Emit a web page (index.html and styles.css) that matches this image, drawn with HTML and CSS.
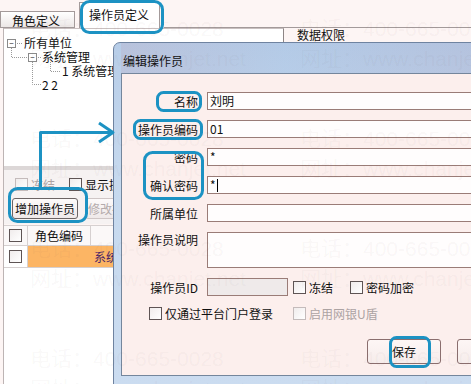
FILE: index.html
```html
<!DOCTYPE html>
<html lang="zh-CN">
<head>
    <meta charset="UTF-8">
    <title>操作员定义</title>
    <link rel="stylesheet" href="styles.css">
</head>
<body>
<div class="screen">
    <div class="tabs">
        <div class="tab">角色定义</div>
        <div class="tab active">操作员定义</div>
        <div class="tab-rest"></div>
    </div>

    <div class="page">
        <div class="left">
            <div class="tree">
                <svg class="tree-lines" width="120" height="100">
                    <path d="M11.5 19 V28.5 H28 M15 14.5 H22 M36 28.5 H41 M32.5 33 V55.5 H41 M50.5 33 V42.5 H60" fill="none" stroke="#9a9a9a" stroke-dasharray="1 1"/>
                </svg>
                <div class="node lvl1"><span class="box">−</span><span class="label">所有单位</span></div>
                <div class="node lvl2"><span class="box">−</span><span class="label">系统管理</span></div>
                <div class="node lvl3"><span class="label">1 系统管理</span></div>
                <div class="node lvl4"><span class="label">2 2</span></div>
            </div>

            <div class="toolbar">
                <div class="checks">
                    <label class="chk off"><span class="cb"></span>冻结</label>
                    <label class="chk"><span class="cb"></span>显示操作员</label>
                </div>
                <div class="btns">
                    <button class="btn">增加操作员</button>
                    <button class="btn off">修改操作员</button>
                </div>
            </div>

            <div class="grid">
                <div class="grid-row head">
                    <div class="cell c-check"><span class="cb"></span></div>
                    <div class="cell c-code">角色编码</div>
                    <div class="cell c-name"></div>
                </div>
                <div class="grid-row">
                    <div class="cell c-check"><span class="cb"></span></div>
                    <div class="cell c-code sel"></div>
                    <div class="cell c-name sel">系统管理</div>
                </div>
            </div>
        </div>

        <div class="group">
            <span class="group-title">数据权限</span>
        </div>
    </div>

    <!-- dialog window -->
    <div class="dialog">
        <div class="titlebar">编辑操作员</div>
        <div class="client">
            <div class="form">
                <span class="lbl">名称</span>
                <div class="field">刘明</div>

                <span class="lbl">操作员编码</span>
                <div class="field">01</div>

                <span class="lbl">密码</span>
                <div class="field">*</div>

                <span class="lbl">确认密码</span>
                <div class="field">*<span class="caret"></span></div>

                <span class="lbl">所属单位</span>
                <div class="field"></div>

                <span class="lbl top">操作员说明</span>
                <div class="field memo"></div>

                <span class="lbl">操作员ID</span>
                <div class="id-row">
                    <div class="field short"></div>
                    <label class="chk"><span class="cb"></span>冻结</label>
                    <label class="chk"><span class="cb"></span>密码加密</label>
                </div>
            </div>

            <div class="opt-row">
                <label class="chk"><span class="cb"></span>仅通过平台门户登录</label>
                <label class="chk off"><span class="cb"></span>启用网银U盾</label>
            </div>

            <div class="actions">
                <button class="btn wide">保存</button>
                <button class="btn wide">取消</button>
            </div>
        </div>
    </div>

    <!-- watermark -->
    <div class="watermark">
        <div class="wm-block"><span>电话：400-665-0028</span><span>电话：400-665-0028</span><span>网址：www.chanjet.net</span><span>网址：www.chanjet.net</span></div>
        <div class="wm-block"><span>电话：400-665-0028</span><span>电话：400-665-0028</span><span>网址：www.chanjet.net</span><span>网址：www.chanjet.net</span></div>
        <div class="wm-block"><span>电话：400-665-0028</span><span>电话：400-665-0028</span><span>网址：www.chanjet.net</span><span>网址：www.chanjet.net</span></div>
        <div class="wm-block"><span>电话：400-665-0028</span><span>电话：400-665-0028</span><span>网址：www.chanjet.net</span><span>网址：www.chanjet.net</span></div>
    </div>

    <!-- tutorial marks -->
    <svg class="marks" width="471" height="384">
        <g fill="none" stroke="#1c92c3" stroke-width="3" stroke-linejoin="round">
            <rect x="81.5" y="1.5" width="81" height="31" rx="8"/>
            <rect x="157.5" y="92.5" width="43" height="18" rx="6"/>
            <rect x="134.5" y="120.5" width="67" height="18" rx="6"/>
            <rect x="144.5" y="152.5" width="58" height="46" rx="8"/>
            <rect x="9.5" y="188.5" width="77" height="33" rx="8"/>
            <rect x="390.5" y="337.5" width="39" height="29" rx="6"/>
            <path d="M40.5 188 V132.5 H112"/>
            <path d="M99 123 L113 132.5 L99 142"/>
        </g>
    </svg>
</div>
</body>
</html>
```

FILE: styles.css
```css
html, body {
    margin: 0;
    padding: 0;
}

body {
    font-family: "Noto Sans CJK SC", "DejaVu Sans", sans-serif;
    font-size: 12px;
    color: #111;
    background: #fdf5f4;
}

.screen {
    position: relative;
    width: 471px;
    height: 384px;
    overflow: hidden;
}

/* tab strip */
.tabs {
    display: flex;
    align-items: flex-end;
    height: 28px;
}

.tab {
    height: 15px;
    line-height: 17px;
    padding: 0 14px 0 11px;
    margin-right: 4px;
    border: 1px solid #a39a9a;
    background: linear-gradient(#ffffff, #ece7e6);
}

.tab.active {
    height: 25px;
    line-height: 24px;
    padding: 0 10px 0 9px;
    border-bottom: none;
    background: #fff;
}

.tab-rest {
    flex: 1;
    border-bottom: 1px solid #a39a9a;
}

/* page under the dialog */
.page {
    display: flex;
    height: 356px;
}

.left {
    width: 280px;
    margin-left: 3px;
    border-left: 1px solid #bdb4b4;
    display: flex;
    flex-direction: column;
}

.tree {
    position: relative;
    height: 130px;
    padding-top: 7px;
    background: #fff;
    border-top: 1px solid #c9c0c0;
    border-right: 1px solid #8d8585;
}

.tree-lines {
    position: absolute;
    top: 0;
    left: -4px;
}

.node {
    display: flex;
    align-items: center;
    height: 14px;
    white-space: nowrap;
}

.node .label {
    line-height: 14px;
}

.lvl1 { padding-left: 3px; }
.lvl2 { padding-left: 24px; }
.lvl3 { padding-left: 58px; }
.lvl4 { padding-left: 38px; }

.box {
    width: 7px;
    height: 7px;
    border: 1px solid #8a8a8a;
    background: #fff;
    font-size: 8px;
    line-height: 6px;
    text-align: center;
    margin-right: 8px;
    color: #222;
}

.lvl2 .box { margin-right: 5px; }

.toolbar {
    border-top: 4px solid #dcd7d7;
    background: #f6f2f2;
    padding: 6px 0 0 0;
    height: 48px;
}

.checks {
    display: flex;
    gap: 14px;
    padding-left: 11px;
    height: 16px;
    align-items: center;
}

.chk {
    display: flex;
    align-items: center;
    gap: 3px;
    white-space: nowrap;
}

.chk.off {
    color: #aca3a3;
}

.cb {
    display: inline-block;
    width: 11px;
    height: 11px;
    border: 1px solid #5e5454;
    background: linear-gradient(135deg, #f0ecec, #ffffff);
}

.chk.off .cb {
    border-color: #c4bbbb;
}

.btns {
    display: flex;
    gap: 7px;
    padding-left: 8px;
    margin-top: 6px;
}

.btn {
    font-family: inherit;
    font-size: 12px;
    height: 21px;
    padding: 0 2px;
    border: 1px solid #6c6464;
    border-radius: 3px;
    background: linear-gradient(#fdfafa, #efe9e9);
    color: #111;
    white-space: nowrap;
}

.btn.off {
    color: #b4abab;
    border-color: #cfc6c6;
}

.grid {
    flex: 1;
    background: #fff;
    margin-top: 1px;
}

.grid-row {
    display: flex;
    height: 21px;
    border-bottom: 1px solid #d6d0d0;
}

.grid-row.head {
    height: 19px;
    background: #fbf8f8;
    border-top: 1px solid #d6d0d0;
}

.cell {
    display: flex;
    align-items: center;
    border-right: 1px solid #d6d0d0;
    white-space: nowrap;
}

.c-check { width: 23px; justify-content: center; }
.c-code { width: 62px; justify-content: center; }
.c-name { flex: 1; padding-left: 4px; color: #4a2468; }

.sel {
    background: #fcb564;
}

.grid-row:not(.head) .c-code { border-right: none; }

.group {
    flex: 1;
    padding: 0 0 0 9px;
    margin-top: -2px;
}

.group-title {
    padding-left: 4px;
    line-height: 16px;
}

/* dialog */
.dialog {
    position: absolute;
    left: 113px;
    top: 42px;
    width: 410px;
    height: 340px;
    border: 1px solid #6f83a0;
    border-radius: 7px 7px 0 0;
    padding: 0 7px 7px 7px;
    background: linear-gradient(#b7cde8, #c6d9ee 40%, #cbdcf0);
    box-sizing: content-box;
}

.titlebar {
    height: 30px;
    line-height: 36px;
    padding-left: 2px;
    background: linear-gradient(90deg, rgba(190, 150, 170, 0.2), rgba(150, 180, 220, 0.1) 40%, rgba(170, 140, 170, 0.2));
}

.client {
    height: 301px;
    border: 1px solid #74869c;
    border-right: none;
    background: #fcefed;
}

.form {
    display: grid;
    grid-template-columns: 76px 1fr;
    column-gap: 9px;
    row-gap: 10px;
    padding-top: 18px;
    align-items: center;
}

.lbl {
    text-align: right;
    white-space: nowrap;
}

.lbl.top {
    align-self: start;
    line-height: 16px;
}

.field {
    height: 16px;
    line-height: 16px;
    border: 1px solid #9a7c77;
    background: #fffdfd;
    padding-left: 2px;
    display: flex;
    align-items: center;
}

.field.memo {
    height: 34px;
}

.field.short {
    width: 77px;
    background: #efeaea;
    flex: none;
}

.caret {
    display: inline-block;
    width: 1px;
    height: 13px;
    background: #000;
    margin-left: 1px;
}

.id-row {
    display: flex;
    align-items: center;
    gap: 5px;
}

.id-row .chk + .chk {
    margin-left: 12px;
}

.opt-row {
    display: flex;
    align-items: center;
    gap: 20px;
    padding-left: 27px;
    margin-top: 10px;
    height: 14px;
}

.actions {
    display: flex;
    gap: 16px;
    padding-left: 245px;
    margin-top: 19px;
}

.btn.wide {
    width: 80px;
    height: 25px;
    border-color: #8a6e6e;
    background: linear-gradient(#fdf6f5, #f6eceb);
}

/* faint watermark over everything */
.watermark {
    position: absolute;
    top: 12px;
    left: 30px;
    pointer-events: none;
    font-family: "Liberation Sans", "Noto Sans CJK SC", sans-serif;
    font-size: 21px;
    color: rgba(110, 80, 80, 0.05);
}

.wm-block {
    display: grid;
    grid-template-columns: 270px 270px;
    grid-auto-rows: 30px;
    height: 110px;
    white-space: nowrap;
}

.marks {
    position: absolute;
    top: 0;
    left: 0;
    pointer-events: none;
}
```
